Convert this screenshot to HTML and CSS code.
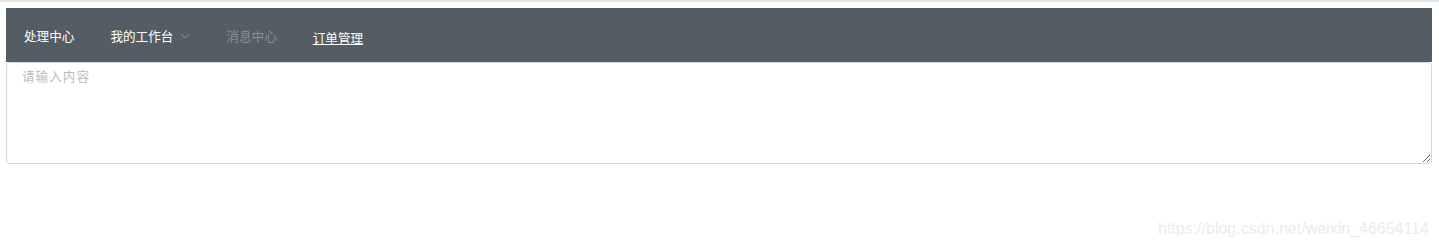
FILE: index.html
```html
<!DOCTYPE html>
<html lang="zh-CN">
<head>
<meta charset="utf-8">
<title>菜单</title>
<link rel="stylesheet" href="styles.css">
</head>
<body>
<div class="topline"></div>
<div class="page">
  <ul class="menu">
    <li class="menu-item">处理中心</li>
    <li class="menu-item submenu">我的工作台
      <svg class="arrow" width="10" height="6" viewBox="0 0 10 6"><path d="M1 1 L5 5 L9 1" fill="none" stroke="#8f959b" stroke-width="1"/></svg>
    </li>
    <li class="menu-item disabled">消息中心</li>
    <li class="menu-item"><a class="link" href="#">订单管理</a></li>
  </ul>
  <textarea class="textarea" placeholder="请输入内容"></textarea>
</div>
<div class="watermark">https://blog.csdn.net/weixin_46654114</div>
</body>
</html>
```
FILE: styles.css
```css
html, body {
  margin: 0;
  padding: 0;
  background: #fff;
  font-family: "Noto Sans CJK SC", "Liberation Sans", sans-serif;
}
.topline {
  height: 2px;
  background: #e4e4e4;
}
.page {
  margin: 6px 7px 0 6px;
}
.menu {
  list-style: none;
  margin: 0;
  padding: 0;
  height: 54px;
  background: #545c64;
  display: flex;
  align-items: center;
}
.menu-item {
  height: 54px;
  padding: 0 18px;
  display: flex;
  align-items: center;
  font-size: 12.6px;
  color: #fff;
  white-space: nowrap;
  cursor: pointer;
}
.submenu .arrow {
  margin-left: 7px;
  margin-top: 1px;
}
.disabled {
  color: #8b9096;
}
.link {
  color: #fff;
  text-decoration: underline;
  padding-top: 4px;
}
.textarea {
  display: block;
  box-sizing: border-box;
  width: 100%;
  height: 102px;
  margin: 0;
  padding: 4px 15px;
  border: 1px solid #d3d6dd;
  border-radius: 4px;
  font-family: "Noto Sans CJK SC", "Liberation Sans", sans-serif;
  font-size: 12.6px;
  line-height: 1.5;
  letter-spacing: 1px;
  color: #606266;
  resize: vertical;
  outline: none;
}
.textarea::placeholder {
  color: #b9bcc3;
}
.watermark {
  position: absolute;
  right: 10px;
  top: 220px;
  font-family: "Liberation Sans", Arial, sans-serif;
  font-size: 16px;
  color: #ececec;
}
```
